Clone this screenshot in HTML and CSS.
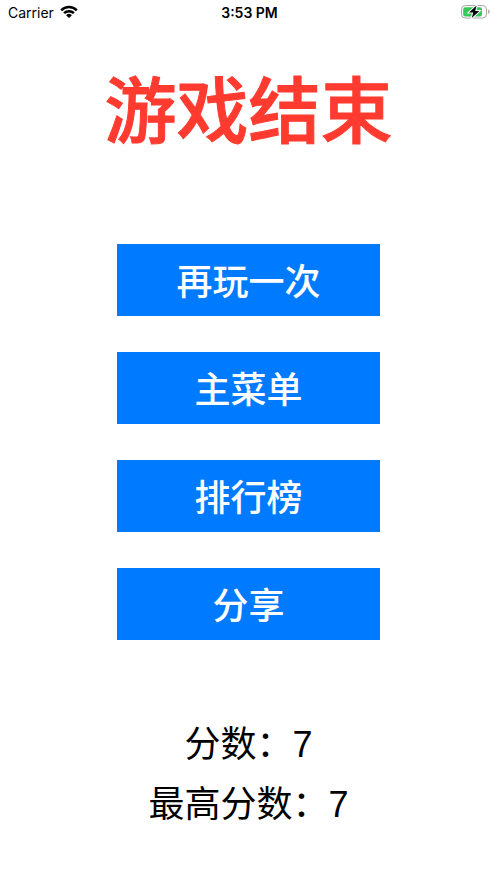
FILE: index.html
```
<!DOCTYPE html>
<html lang="zh-CN">
<head>
    <meta charset="UTF-8">
    <meta name="viewport" content="width=device-width, initial-scale=1.0">
    <title>游戏结束</title>
    <link rel="stylesheet" href="styles.css">
</head>
<body>
    <header class="status-bar">
        <div class="carrier">
            <span>Carrier</span>
            <svg class="wifi" width="18" height="14" viewBox="0 0 18 14" aria-hidden="true">
                <path d="M0.3 4.4a12.4 12.4 0 0 1 17.4 0l-1.8 1.8a9.8 9.8 0 0 0-13.8 0z"/>
                <path d="M3.2 7.3a8.2 8.2 0 0 1 11.6 0l-1.8 1.8a5.7 5.7 0 0 0-8 0z"/>
                <path d="M6.1 10.2a4.1 4.1 0 0 1 5.8 0L9 13.1z"/>
            </svg>
        </div>
        <time class="clock">3:53 PM</time>
        <div class="battery">
            <svg width="30" height="14" viewBox="0 0 30 14" aria-hidden="true">
                <rect class="battery-case" x="0.5" y="0.5" width="25" height="12.5" rx="3.8"/>
                <rect class="battery-level" x="2.2" y="2.2" width="18.8" height="9.2" rx="2"/>
                <path class="battery-cap" d="M27.2 4.6c2 .6 2 3.8 0 4.4z"/>
                <path class="battery-bolt" d="M15.6 0.6L8 7.6h4.2L10.8 13 18.4 6h-4.2z"/>
            </svg>
        </div>
    </header>

    <main class="game-over">
        <h1>游戏结束</h1>

        <div class="menu">
            <button type="button">再玩一次</button>
            <button type="button">主菜单</button>
            <button type="button">排行榜</button>
            <button type="button">分享</button>
        </div>

        <div class="scores">
            <p>分数：7</p>
            <p>最高分数：7</p>
        </div>
    </main>
</body>
</html>
```
FILE: styles.css
```
* { box-sizing: border-box; }
body { margin: 0; background: #fff; color: #000; font-family: "Liberation Sans", "Noto Sans CJK SC", sans-serif; }

.status-bar { display: grid; grid-template-columns: 1fr auto 1fr; align-items: center; height: 24px; padding: 0 6px 0 8px; font-family: Inter, sans-serif; font-size: 14px; }
.carrier { display: flex; align-items: center; gap: 6px; }
.clock { font-weight: 600; }
.battery { display: flex; justify-content: flex-end; }
.battery-case { fill: #fff; stroke: #a6a6a6; }
.battery-level { fill: #35c759; }
.battery-cap { fill: #a6a6a6; }
.battery-bolt { fill: #000; stroke: #fff; stroke-width: 2; paint-order: stroke; }

.game-over { display: flex; flex-direction: column; align-items: center; }
h1 { margin: 38px 0 0; color: #ff3b30; font-size: 72px; font-weight: 500; line-height: 100px; -webkit-text-stroke: 1px #ff3b30; }

.menu { display: flex; flex-direction: column; gap: 36px; width: 53%; margin-top: 82px; }
.menu button { height: 72px; padding: 6px 0 0; border: 0; background: #007aff; color: #fff; font-family: inherit; font-size: 36px; font-weight: 500; line-height: 66px; }

.scores { margin-top: 75px; text-align: center; }
.scores p { margin: 0; font-size: 36px; line-height: 60px; }
```
